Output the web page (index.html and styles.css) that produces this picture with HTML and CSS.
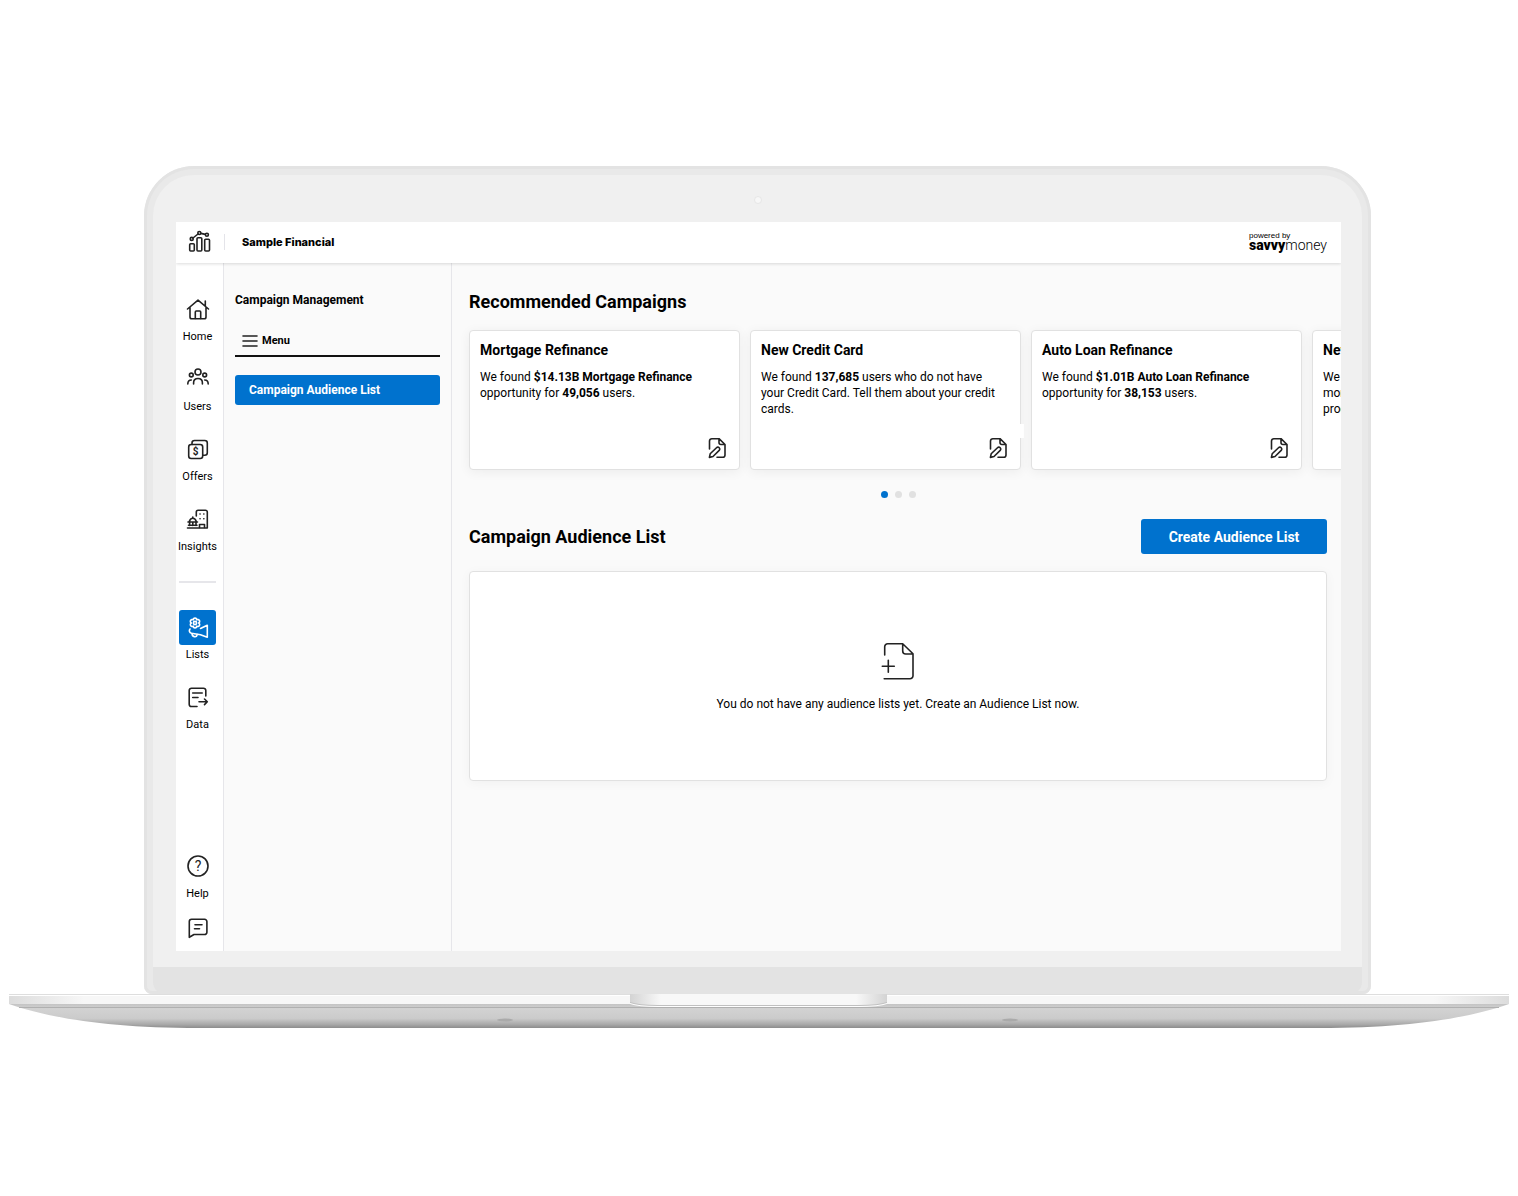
FILE: index.html
```html
<!DOCTYPE html>
<html lang="en">
  <head>
    <meta charset="UTF-8">
    <title>Campaign Management</title>
    <link rel="stylesheet" href="styles.css">
  </head>
  <body>
    <svg class="sprite" aria-hidden="true">
      <symbol id="icon-edit" viewBox="0 0 24 24">
        <path d="M4.5 13V5a2.3 2.3 0 0 1 2.3-2.3H14L20 8.5V19a2.3 2.3 0 0 1-2.3 2.3H12M14 3v3.5a2 2 0 0 0 2 2h4"/>
        <path d="M4.4 21.4l.8-3.6 6.3-6.1a1.9 1.9 0 0 1 2.7 2.7L8 20.5z"/>
      </symbol>
    </svg>

    <div class="laptop">
      <div class="lid">
        <div class="bezel">
          <span class="camera"></span>
          <div class="screen">
            <header class="topbar">
              <svg class="icon logo" viewBox="0 0 24 24">
                <rect x="1.7" y="13.7" width="4.6" height="7.3" rx="1"/>
                <rect x="9" y="7.8" width="4.8" height="13.2" rx="1"/>
                <rect x="16.7" y="9.3" width="4.8" height="11.7" rx="1"/>
                <circle cx="3.7" cy="8.9" r="1.5"/>
                <circle cx="11.3" cy="3" r="1.5"/>
                <circle cx="18.9" cy="4.8" r="1.5"/>
                <path d="M5 8l5-4M12.9 3.400l4.4 1"/>
              </svg>
              <span class="brand">Sample Financial</span>
              <div class="powered">
                <span class="powered-by">powered by</span>
                <span class="savvy"><b>savvy</b>money</span>
              </div>
            </header>

            <div class="app">
              <nav class="rail">
                <a class="rail-item" href="#">
                  <span class="rail-icon">
                    <svg class="icon" viewBox="0 0 24 24">
                      <path d="M1.5 11L12 2.200 22.500 11M19.300 8V3M4 9.500V19a1.800 1.800 0 0 0 1.800 1.800h12.400A1.800 1.800 0 0 0 20 19V9.500"/>
                      <path d="M9.300 20.500V14a1 1 0 0 1 1-1h3.400a1 1 0 0 1 1 1v6.500"/>
                    </svg>
                  </span>
                  Home
                </a>
                <a class="rail-item" href="#">
                  <span class="rail-icon">
                    <svg class="icon" viewBox="0 0 24 24">
                      <circle cx="12" cy="4" r="3"/>
                      <circle cx="5.3" cy="7" r="1.9"/>
                      <circle cx="18.7" cy="7" r="1.9"/>
                      <path d="M7.6 16v-1.200c0-2.800 1.600-4.300 4.400-4.300s4.400 1.500 4.400 4.300V16"/>
                      <path d="M1.8 16c0-2.600 1-4 3.500-4M22.200 16c0-2.600-1-4-3.500-4"/>
                    </svg>
                  </span>
                  Users
                </a>
                <a class="rail-item" href="#">
                  <span class="rail-icon">
                    <svg class="icon" viewBox="0 0 24 24">
                      <rect x="2.7" y="6.5" width="14" height="14" rx="2.5"/>
                      <path d="M6 6.500V5a2.500 2.500 0 0 1 2.500-2.500h10.300a2.500 2.500 0 0 1 2.500 2.500v9.700a2.500 2.500 0 0 1-2.500 2.500h-2"/>
                      <text x="9.7" y="17" class="icon-text">$</text>
                    </svg>
                  </span>
                  Offers
                </a>
                <a class="rail-item" href="#">
                  <span class="rail-icon">
                    <svg class="icon" viewBox="0 0 24 24">
                      <path d="M10.300 8V4a1.800 1.800 0 0 1 1.800-1.800h7.400A1.800 1.800 0 0 1 21.300 4v16H1.500"/>
                      <path d="M2 14h9.500M3.300 13.500c.6-2.200 1.800-3.200 3.500-3.200s2.900 1 3.500 3.200M6.800 10V9M3.600 14.500v3M6.800 14.500v3M10 14.500v3M2.500 17.300H11"/>
                      <path d="M13.500 19.500v-3h5v3"/>
                      <path d="M14 6h.1M17.800 6h.1M14 10.800h.1M17.800 10.800h.1"/>
                    </svg>
                  </span>
                  Insights
                </a>
                <hr class="rail-divider">
                <a class="rail-item active" href="#">
                  <span class="rail-icon">
                    <svg class="icon" viewBox="0 0 24 24">
                      <circle cx="9" cy="7" r="1.6"/>
                      <path d="M7.200 3.900a1.800 1.800 0 1 1 3.600 0a1.800 1.800 0 1 1 1.800 3.100a1.800 1.800 0 1 1-1.800 3.100a1.800 1.800 0 1 1-3.600 0a1.800 1.800 0 1 1-1.800-3.100a1.800 1.800 0 1 1 1.800-3.100z"/>
                      <path d="M14.500 12.500l6.800-3.200v12l-6.800-2.600-9-1.400c-2.200-.5-2.700-2.700-1.500-4.300"/>
                      <path d="M6 17.500c0 3.500 4.500 4.500 5.300 1"/>
                    </svg>
                  </span>
                  Lists
                </a>
                <a class="rail-item" href="#">
                  <span class="rail-icon">
                    <svg class="icon" viewBox="0 0 24 24">
                      <path d="M19.800 10V4.500a2.300 2.300 0 0 0-2.300-2.300h-12a2.300 2.300 0 0 0-2.300 2.300v13.700a2.300 2.300 0 0 0 2.300 2.300H11"/>
                      <path d="M6.700 7h9.500M6.700 11.500H12M13 15.800h8M18.500 13l2.800 2.800-2.800 2.800"/>
                    </svg>
                  </span>
                  Data
                </a>
                <div class="rail-footer">
                  <a class="rail-item" href="#">
                    <span class="rail-icon">
                      <svg class="icon" viewBox="0 0 24 24">
                        <circle cx="12" cy="12" r="10"/>
                        <text x="12" y="16.7" class="icon-text icon-text-large">?</text>
                      </svg>
                    </span>
                    Help
                  </a>
                  <a class="rail-item" href="#" aria-label="Feedback">
                    <span class="rail-icon">
                      <svg class="icon" viewBox="0 0 24 24">
                        <path d="M3.300 21.300V5.600a2.300 2.300 0 0 1 2.300-2.300h13a2.300 2.300 0 0 1 2.300 2.300v10.600a2.300 2.300 0 0 1-2.300 2.300H8z"/>
                        <path d="M9 8.800h7M8.500 12.700h5"/>
                      </svg>
                    </span>
                  </a>
                </div>
              </nav>

              <aside class="sidebar">
                <h2 class="sidebar-title">Campaign Management</h2>
                <button class="menu-button" type="button">
                  <svg class="icon menu-icon" viewBox="0 0 16 12"><path d="M1 1h14M1 6h14M1 11h14"/></svg>
                  Menu
                </button>
                <a class="sidebar-link" href="#">Campaign Audience List</a>
              </aside>

              <main class="content">
                <h1 class="section-title">Recommended Campaigns</h1>
                <div class="cards">
                  <article class="card">
                    <h3>Mortgage Refinance</h3>
                    <p>We found <b>$14.13B Mortgage Refinance</b> opportunity for <b>49,056</b> users.</p>
                    <button class="card-edit" type="button" aria-label="Edit"><svg class="icon"><use href="#icon-edit"/></svg></button>
                  </article>
                  <article class="card card-notched">
                    <h3>New Credit Card</h3>
                    <p>We found <b>137,685</b> users who do not have your Credit Card. Tell them about your credit cards.</p>
                    <button class="card-edit" type="button" aria-label="Edit"><svg class="icon"><use href="#icon-edit"/></svg></button>
                  </article>
                  <article class="card">
                    <h3>Auto Loan Refinance</h3>
                    <p>We found <b>$1.01B Auto Loan Refinance</b> opportunity for <b>38,153</b> users.</p>
                    <button class="card-edit" type="button" aria-label="Edit"><svg class="icon"><use href="#icon-edit"/></svg></button>
                  </article>
                  <article class="card">
                    <h3>New Mortgage</h3>
                    <p>We found users who do not have a<br>mortgage. Tell them about your<br>products.</p>
                    <button class="card-edit" type="button" aria-label="Edit"><svg class="icon"><use href="#icon-edit"/></svg></button>
                  </article>
                </div>
                <div class="dots">
                  <button class="dot current" type="button" aria-label="Page 1"></button>
                  <button class="dot" type="button" aria-label="Page 2"></button>
                  <button class="dot" type="button" aria-label="Page 3"></button>
                </div>

                <div class="list-header">
                  <h2 class="section-title">Campaign Audience List</h2>
                  <button class="create-button" type="button">Create Audience List</button>
                </div>
                <div class="empty">
                  <svg class="icon empty-icon" viewBox="0 0 40 40">
                    <path d="M6.700 14V5.700a3 3 0 0 1 3-3h15L35 12.700v22a3 3 0 0 1-3 3H6.200M24.700 3v7a3 3 0 0 0 3 3H35"/>
                    <path d="M10.300 19.300v12M4.300 25.300h12"/>
                  </svg>
                  <p>You do not have any audience lists yet. Create an Audience List now.</p>
                </div>
              </main>
            </div>
          </div>
        </div>
        <div class="chin"></div>
      </div>

      <svg class="base" viewBox="0 0 1500 34" preserveAspectRatio="none" aria-hidden="true">
        <defs>
          <linearGradient id="deck" x1="0" x2="1" y1="0" y2="0">
            <stop offset="0" stop-color="#dcdcdc"/>
            <stop offset=".05" stop-color="#f7f7f7"/>
            <stop offset=".95" stop-color="#f7f7f7"/>
            <stop offset="1" stop-color="#dcdcdc"/>
          </linearGradient>
          <linearGradient id="belly" x1="0" x2="0" y1="0" y2="1">
            <stop offset="0" stop-color="#c4c4c4"/>
            <stop offset=".2" stop-color="#d2d2d2"/>
            <stop offset=".6" stop-color="#cbcbcb"/>
            <stop offset=".85" stop-color="#a9a9a9"/>
            <stop offset="1" stop-color="#8c8c8c"/>
          </linearGradient>
          <linearGradient id="notch" x1="0" x2="1" y1="0" y2="0">
            <stop offset="0" stop-color="#d3d3d3"/>
            <stop offset=".12" stop-color="#f8f8f8"/>
            <stop offset=".88" stop-color="#f8f8f8"/>
            <stop offset="1" stop-color="#d3d3d3"/>
          </linearGradient>
        </defs>
        <path d="M0 10H1500C1460 24 1400 34 1310 34H190C100 34 40 24 0 10z" fill="url(#belly)"/>
        <path d="M10 13.500H1490" stroke="#b0b0b0"/>
        <rect width="1500" height="10" fill="url(#deck)"/>
        <path d="M0 .5H1500" stroke="#dedede"/>
        <path d="M0 1.500H1500" stroke="#fff"/>
        <path d="M621 0H878V10Q870 13 850 13H649Q629 13 621 10z" fill="#fff"/>
        <path d="M621 0H878V9Q870 12 850 12H649Q629 12 621 9z" fill="#c0c0c0"/>
        <path d="M621 0H878V8Q870 11 850 11H649Q629 11 621 8z" fill="url(#notch)"/>
        <ellipse cx="496" cy="26" rx="8" ry="1.5" fill="#aaa"/>
        <ellipse cx="1001" cy="26" rx="8" ry="1.5" fill="#aaa"/>
      </svg>
    </div>
  </body>
</html>
```
FILE: styles.css
```css
* {
  box-sizing: border-box;
}

body {
  margin: 0;
  min-height: 100vh;
  padding: 0 9px 2px;
  display: flex;
  flex-direction: column;
  justify-content: center;
  background-color: #fff;
  color: #000;
  font-family: Roboto, Arial, sans-serif;
  font-size: 12px;
  line-height: 16px;
}

h1, h2, h3, p {
  margin: 0;
}

a {
  color: inherit;
  text-decoration: none;
}

button {
  border: none;
  padding: 0;
  background: none;
  color: inherit;
  font: inherit;
  cursor: pointer;
}

.sprite {
  display: none;
}

.icon {
  display: block;
  width: 24px;
  height: 24px;
  fill: none;
  stroke: #222;
  stroke-width: 1.6;
  stroke-linecap: round;
  stroke-linejoin: round;
}

.icon-text {
  fill: #222;
  stroke: none;
  font-size: 10px;
  font-weight: 700;
  text-anchor: middle;
}

.icon-text-large {
  font-size: 14px;
  font-weight: 400;
}

/* laptop */
.lid {
  margin: 0 138px 0 135px;
  padding: 9px 9px 0;
  border-radius: 50px 50px 8px 8px;
  background-color: #e9e9e9;
  box-shadow: inset 0 0 0 3px #e3e3e3;
}

.bezel {
  position: relative;
  padding: 47px 21px 16px 23px;
  border-radius: 41px 41px 0 0;
  background-color: #f0f0f0;
}

.camera {
  position: absolute;
  top: 21px;
  left: 50%;
  width: 8px;
  height: 8px;
  border: 1px solid #e6e6e6;
  border-radius: 50%;
  background-color: #f7f7f7;
  transform: translateX(-50%);
}

.chin {
  height: 27px;
  border-radius: 0 0 12px 12px;
  background-color: #e3e3e3;
}

.base {
  display: block;
  width: 100%;
  height: 34px;
}

.screen {
  display: flex;
  flex-direction: column;
  aspect-ratio: 8 / 5;
  overflow: hidden;
  background-color: #fafafa;
}

/* top bar */
.topbar {
  position: relative;
  display: flex;
  align-items: center;
  height: 41px;
  padding: 0 14px 1px 12px;
  background-color: #fff;
  box-shadow: 0 1px 3px rgba(0, 0, 0, 0.14);
}

.brand {
  margin-left: 12px;
  padding-left: 17px;
  border-left: 1px solid #e4e4e9;
  font-family: Inter, sans-serif;
  font-size: 11px;
  font-weight: 800;
}

.powered {
  display: flex;
  flex-direction: column;
  margin-left: auto;
  padding-bottom: 1px;
  font-family: "Liberation Sans", Arial, sans-serif;
}

.powered-by {
  font-size: 8px;
  line-height: 8px;
}

.savvy {
  font-family: Roboto, sans-serif;
  font-size: 14px;
  font-weight: 300;
  line-height: 11px;
}

.savvy b {
  font-weight: 900;
}

.app {
  display: flex;
  flex: 1;
  min-height: 0;
}

/* icon rail */
.rail {
  display: flex;
  flex-direction: column;
  align-items: center;
  gap: 17px;
  width: 48px;
  padding: 29px 7px 5px 3px;
  border-right: 1px solid #e6e6ea;
  background-color: #fff;
}

.rail-item {
  display: flex;
  flex-direction: column;
  align-items: center;
  gap: 2px;
  font-size: 11px;
}

.rail-icon {
  display: flex;
  align-items: center;
  justify-content: center;
  width: 37px;
  height: 35px;
  border-radius: 3px;
}

.active .rail-icon {
  background-color: #0072ce;
}

.active .icon {
  stroke: #fff;
}

.rail-divider {
  width: 100%;
  height: 2px;
  margin: 9px 0 10px;
  border: none;
  background-color: #e6e6ea;
}

.rail-footer {
  display: flex;
  flex-direction: column;
  gap: 9px;
  margin-top: auto;
}

/* sidebar */
.sidebar {
  width: 228px;
  padding: 29px 11px 0;
  border-right: 1px solid #e6e6ea;
}

.sidebar-title {
  font-size: 12px;
  font-weight: 700;
  line-height: 16px;
}

.menu-button {
  display: flex;
  align-items: center;
  gap: 4px;
  width: 100%;
  height: 33px;
  margin-top: 16px;
  padding: 2px 0 0 7px;
  border-bottom: 2px solid #111;
  font-size: 11px;
  font-weight: 700;
}

.menu-icon {
  width: 16px;
  height: 12px;
}

.sidebar-link {
  display: block;
  margin-top: 18px;
  padding: 7px 14px;
  border-radius: 3px;
  background-color: #0072ce;
  color: #fff;
  font-size: 12px;
  font-weight: 700;
}

/* content */
.content {
  flex: 1;
  min-width: 0;
  padding: 29px 14px 0 17px;
}

.section-title {
  font-size: 18px;
  font-weight: 700;
  line-height: 20px;
}

.cards {
  display: flex;
  gap: 10px;
  margin-top: 18px;
}

.card {
  position: relative;
  display: flex;
  flex: 0 0 271px;
  flex-direction: column;
  min-height: 140px;
  padding: 10px 10px 9px;
  border: 1px solid #e1e1e1;
  border-radius: 4px;
  background-color: #fff;
  box-shadow: 0 2px 12px rgba(0, 0, 0, 0.06);
}

.card h3 {
  margin-bottom: 10px;
  font-size: 14px;
  font-weight: 700;
  line-height: 18px;
}

.card p {
  padding-right: 8px;
}

.card-edit {
  margin-top: auto;
  margin-left: auto;
}

.card-notched::after {
  content: "";
  position: absolute;
  top: 93px;
  right: -4px;
  width: 6px;
  height: 14px;
  background-color: #fff;
}

.dots {
  display: flex;
  justify-content: center;
  gap: 7px;
  margin-top: 21px;
}

.dot {
  width: 7px;
  height: 7px;
  border-radius: 50%;
  background-color: #e1e1e1;
}

.dot.current {
  background-color: #0072ce;
}

.list-header {
  display: flex;
  align-items: center;
  justify-content: space-between;
  margin-top: 21px;
}

.create-button {
  width: 186px;
  height: 35px;
  border-radius: 3px;
  background-color: #0072ce;
  color: #fff;
  font-size: 14px;
  font-weight: 700;
}

.empty {
  display: flex;
  flex-direction: column;
  align-items: center;
  justify-content: center;
  gap: 15px;
  min-height: 210px;
  margin-top: 17px;
  border: 1px solid #e1e1e1;
  border-radius: 4px;
  background-color: #fff;
  box-shadow: 0 2px 12px rgba(0, 0, 0, 0.04);
}

.empty-icon {
  width: 40px;
  height: 40px;
}
```
